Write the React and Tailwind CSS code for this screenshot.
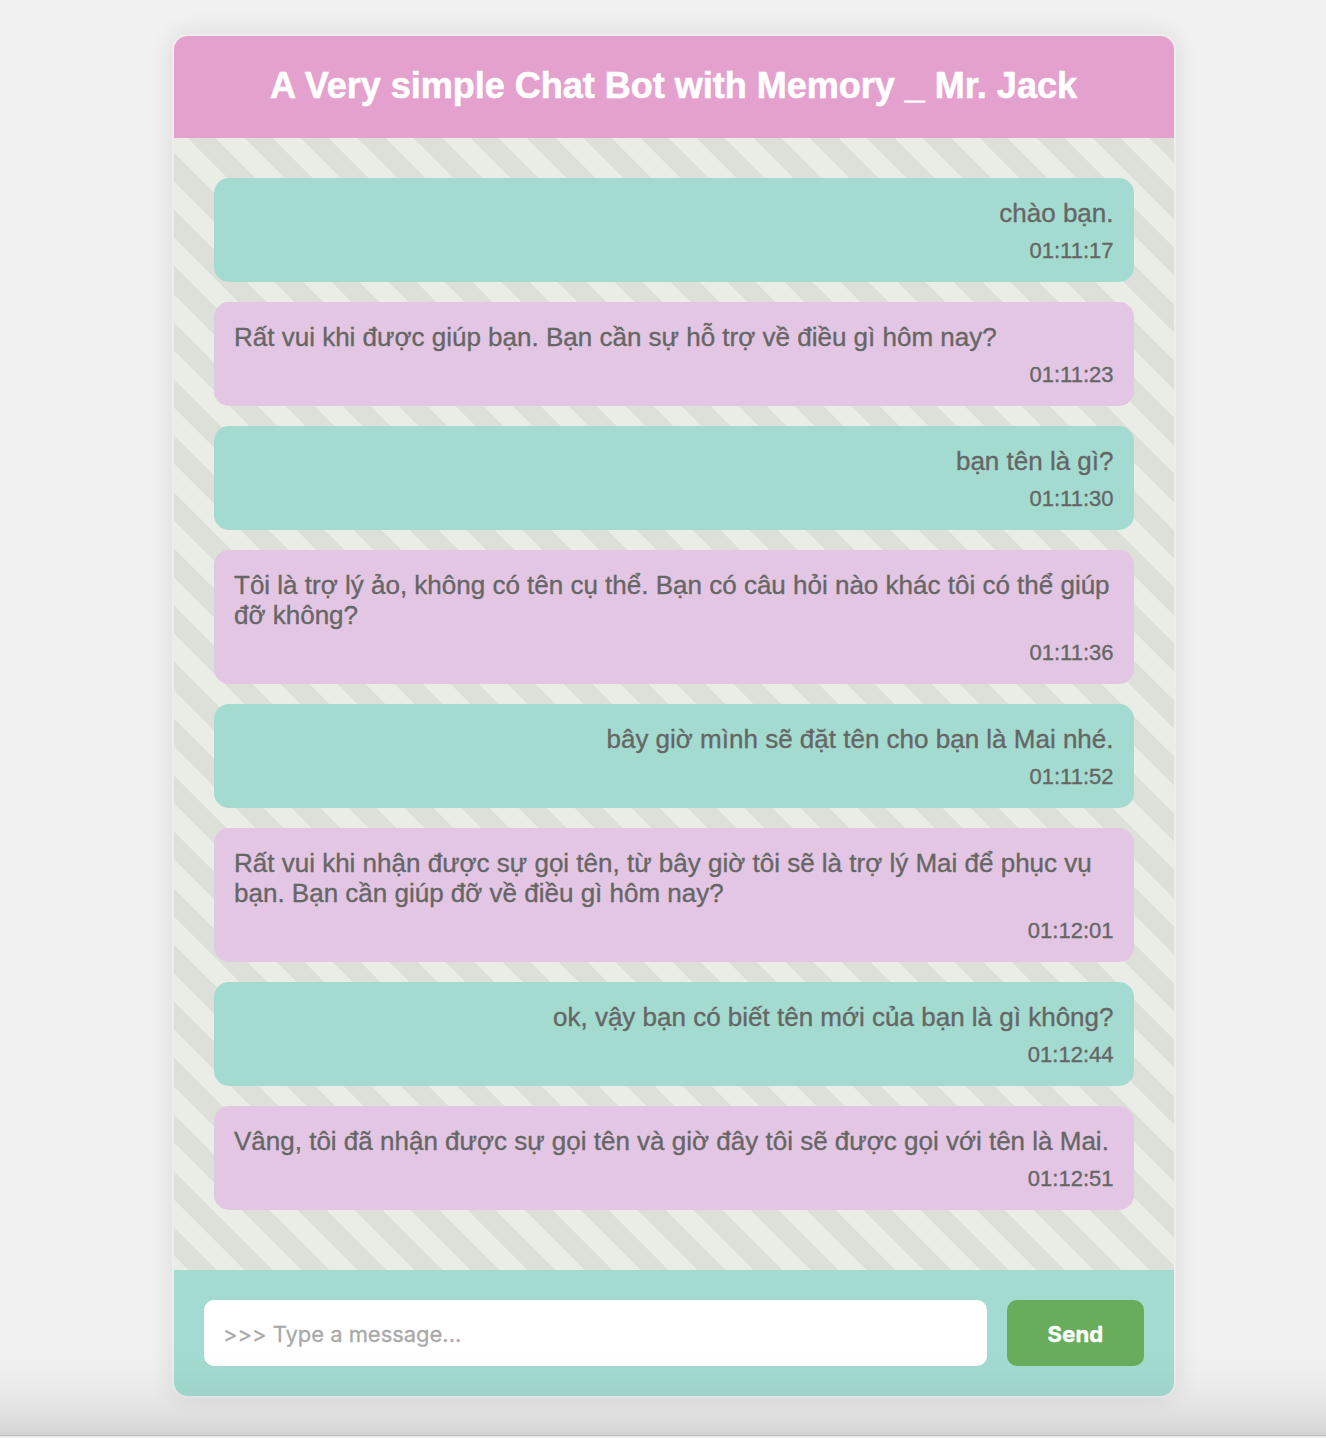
const messages = [
  { from: "user", lines: ["chào bạn."], time: "01:11:17" },
  { from: "bot", lines: ["Rất vui khi được giúp bạn. Bạn cần sự hỗ trợ về điều gì hôm nay?"], time: "01:11:23" },
  { from: "user", lines: ["bạn tên là gì?"], time: "01:11:30" },
  { from: "bot", lines: ["Tôi là trợ lý ảo, không có tên cụ thể. Bạn có câu hỏi nào khác tôi có thể giúp", "đỡ không?"], time: "01:11:36" },
  { from: "user", lines: ["bây giờ mình sẽ đặt tên cho bạn là Mai nhé."], time: "01:11:52" },
  { from: "bot", lines: ["Rất vui khi nhận được sự gọi tên, từ bây giờ tôi sẽ là trợ lý Mai để phục vụ", "bạn. Bạn cần giúp đỡ về điều gì hôm nay?"], time: "01:12:01" },
  { from: "user", lines: ["ok, vậy bạn có biết tên mới của bạn là gì không?"], time: "01:12:44" },
  { from: "bot", lines: ["Vâng, tôi đã nhận được sự gọi tên và giờ đây tôi sẽ được gọi với tên là Mai."], time: "01:12:51" },
];

function Message({ from, lines, time }) {
  const user = from === "user";
  return (
    <div className={"rounded-[15px] p-5 text-[#666666] [-webkit-text-stroke:0.35px_#666666] " + (user ? "bg-[#a3dbd0]" : "bg-[#e3c6e3]")}>
      <div className={"text-[26px] leading-[30px] whitespace-nowrap " + (user ? "pr-[0.5px] text-right" : "text-left")}>
        {lines.map((line) => (
          <div key={line}>{line}</div>
        ))}
      </div>
      <div className="mt-[10px] h-6 pr-[0.5px] text-right text-[22px] leading-[25px]">{time}</div>
    </div>
  );
}

export default function App() {
  return (
    <div className="relative h-[1438px] w-[1326px] overflow-hidden bg-[#f1f1f1] pt-[34px] pl-[172px] font-['Liberation_Sans',Arial,sans-serif]">
      <div className="flex h-[1364px] w-[1004px] flex-col overflow-hidden rounded-[16px] border-2 border-[#ededed] shadow-[0_0_24px_rgba(0,0,0,0.1)]">
        <header className="flex h-[102px] shrink-0 items-center justify-center bg-[#e5a1ce]">
          <h1 className="pr-[1px] pb-[2px] text-[36px] leading-[42px] font-bold whitespace-nowrap text-white [-webkit-text-stroke:0.6px_white]">
            A Very simple Chat Bot with Memory _ Mr. Jack
          </h1>
        </header>
        <main className="flex h-[1132px] shrink-0 flex-col gap-5 bg-[repeating-linear-gradient(45deg,#eaece6_0px,#eaece6_10px,#dde0d9_10px,#dde0d9_30px,#eaece6_30px,#eaece6_40px)] p-10">
          {messages.map((m) => (
            <Message key={m.time} {...m} />
          ))}
        </main>
        <footer className="flex flex-1 gap-5 bg-[#a3dbd0] p-[30px] font-[Inter,sans-serif]">
          <input
            className="h-[66px] w-[783px] rounded-[10px] bg-white pt-[2px] pr-5 pl-[19px] text-[22px] tracking-[-0.04px] outline-none [-webkit-text-stroke:0.3px_#a9a9a9] placeholder:text-[#a9a9a9]"
            placeholder=">>> Type a message..."
          />
          <button className="h-[66px] w-[137px] rounded-[10px] bg-[#68ad5c] pt-[2px] text-[22px] font-bold tracking-[0.2px] text-white [-webkit-text-stroke:0.4px_white]">
            Send
          </button>
        </footer>
      </div>
      <div className="pointer-events-none absolute bottom-[3px] left-0 h-[90px] w-full bg-[linear-gradient(to_bottom,rgba(0,0,0,0)_0%,rgba(0,0,0,0.012)_30%,rgba(0,0,0,0.045)_60%,rgba(0,0,0,0.075)_80%,rgba(0,0,0,0.125)_100%)]" />
      <div className="absolute bottom-0 left-0 h-[3px] w-full border-t border-[#b9b9b9] bg-[#ededed]" />
    </div>
  );
}
